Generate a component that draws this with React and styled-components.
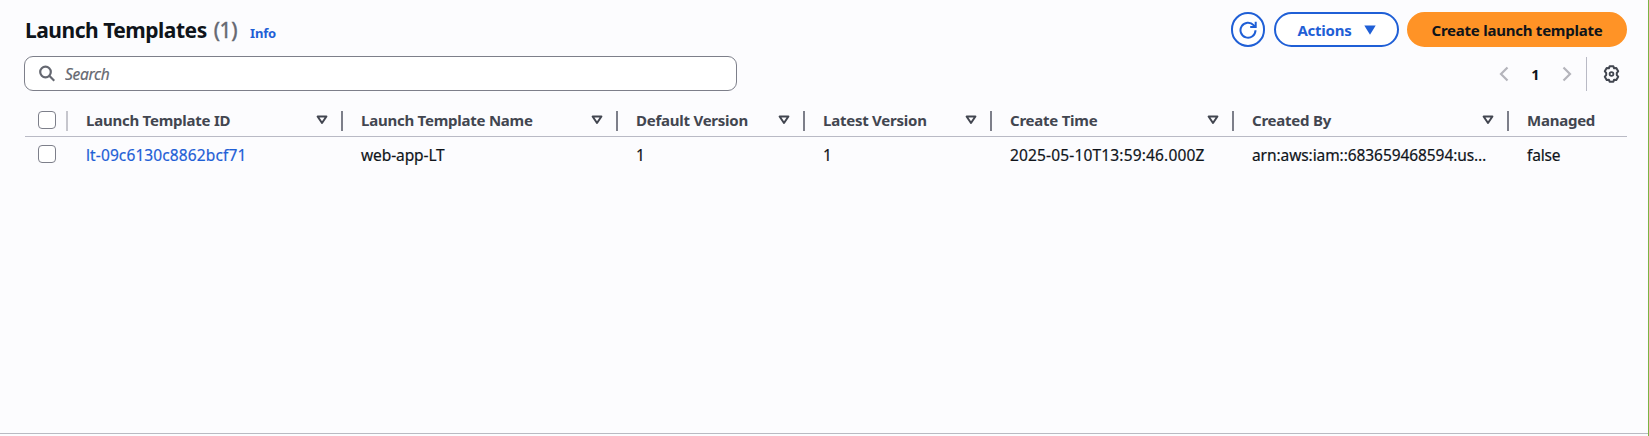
import React from "react";
import styled, { createGlobalStyle } from "styled-components";

const GlobalStyle = createGlobalStyle`
  *, *::before, *::after { box-sizing: border-box; }
  body { margin: 0; background: #fcfcfe; }
  button, input { font: inherit; letter-spacing: inherit; }
`;

const Panel = styled.main`
  display: flex;
  flex-direction: column;
  height: 434px;
  padding: 12px 21px 0 24px;
  border-bottom: 1px solid #b9bac2;
  background: #fcfcfe;
  color: #0f141a;
  font-family: "Noto Sans", "Open Sans", sans-serif;
  font-size: 15px;
`;

const Page = styled.div`
  height: 436px;
  border-right: 1px solid #7cb342;
`;

const Header = styled.header`
  display: flex;
  align-items: center;
  justify-content: space-between;
  height: 35px;
`;

const Heading = styled.div`
  display: flex;
  align-items: baseline;
  padding-top: 1px;
  padding-left: 1px;
`;

const Title = styled.h1`
  margin: 0;
  font-size: 21px;
  line-height: 28px;
  font-weight: 700;
  letter-spacing: -0.49px;
`;

const Counter = styled.span`
  margin-left: 7px;
  color: #656871;
  font-size: 21px;
  letter-spacing: -0.4px;
  -webkit-text-stroke: 0.4px currentColor;
`;

const InfoLink = styled.a`
  margin-left: 13px;
  color: #1f5fd6;
  font-size: 13px;
  font-weight: 700;
  letter-spacing: -0.2px;
`;

const ButtonGroup = styled.div`
  display: flex;
  gap: 8px;
`;

const Button = styled.button`
  display: flex;
  align-items: center;
  justify-content: center;
  gap: 12px;
  width: ${(p) => p.$width}px;
  height: 35px;
  padding: 0;
  border: 2px solid ${(p) => (p.$primary ? "#ff9326" : "#1f5fd6")};
  border-radius: 18px;
  background: ${(p) => (p.$primary ? "#ff9326" : "#fff")};
  color: ${(p) => (p.$primary ? "#0f141a" : "#1f5fd6")};
  font-weight: 700;
`;

const IconButton = styled(Button)`
  margin-right: 1px;
`;

const Toolbar = styled.div`
  display: flex;
  align-items: center;
  justify-content: space-between;
  height: 35px;
  margin-top: 9px;
`;

const SearchBox = styled.label`
  display: flex;
  align-items: center;
  gap: 10px;
  width: 713px;
  height: 35px;
  padding: 0 14px;
  border: 1px solid #7d7f8a;
  border-radius: 9px;
  background: #fff;
`;

const SearchInput = styled.input`
  flex: 1;
  padding: 0;
  border: 0;
  outline: 0;
  background: transparent;
  &::placeholder {
    color: #656871;
    opacity: 1;
    font-size: 15.5px;
    font-style: italic;
    letter-spacing: -0.3px;
    -webkit-text-stroke: 0.2px currentColor;
  }
`;

const Pagination = styled.nav`
  display: flex;
  align-items: center;
  height: 34px;
  padding-right: 7px;
`;

const PageNumber = styled.span`
  width: 53px;
  text-align: center;
  font-size: 14.5px;
  font-weight: 700;
`;

const Divider = styled.span`
  width: 1px;
  height: 34px;
  margin: 0 16px 0 14px;
  background: #b9bac5;
`;

const Row = styled.div`
  display: grid;
  grid-template-columns: 43px 275px 275px 187px 187px 242px 275px 1fr;
  height: ${(p) => (p.$head ? 31 : 38)}px;
  margin-top: ${(p) => (p.$head ? 15 : 0)}px;
  margin-left: 1px;
  border-bottom: ${(p) => (p.$head ? "1px solid #b9bac5" : "0")};
`;

const SelectCell = styled.div`
  display: flex;
  align-items: flex-start;
  height: ${(p) => (p.$head ? 20 : 38)}px;
  margin-top: ${(p) => (p.$head ? 5 : 0)}px;
  padding-left: 13px;
  padding-top: ${(p) => (p.$head ? 0 : 8)}px;
  border-right: ${(p) => (p.$head ? "2px solid #c6c6cd" : "0")};
`;

const Checkbox = styled.input`
  appearance: none;
  width: 18px;
  height: 18px;
  margin: 0;
  border: 1px solid #7d7f8a;
  border-radius: 4px;
  background: #fff;
`;

const HeadCell = styled.div`
  display: flex;
  align-items: center;
  justify-content: space-between;
  height: 20px;
  margin-top: 5px;
  padding: 0 13px 2px 18px;
  border-right: ${(p) => (p.$last ? "0" : "2px solid #7d7f8a")};
  color: #424650;
  font-weight: 700;
  white-space: nowrap;
`;

const Label = styled.span`
  letter-spacing: -0.24px;
`;

const Cell = styled.div`
  padding: 7px 18px 0;
  font-size: 15.5px;
  line-height: 22px;
  letter-spacing: ${(p) => p.$tracking || 0}px;
  white-space: nowrap;
  -webkit-text-stroke: 0.2px currentColor;
`;

const ResourceLink = styled.a`
  color: #1f5fd6;
`;

const SortIcon = () => (
  <svg width="12" height="10" viewBox="0 0 12 10" fill="none" stroke="#424650" strokeWidth="2">
    <path d="M1.600 1.500h8.800L6 8z" strokeLinejoin="round" />
  </svg>
);

const Chevron = ({ d }) => (
  <svg width="10" height="16" viewBox="0 0 10 16" fill="none" stroke="#b4b4bb" strokeWidth="2.200">
    <path d={d} />
  </svg>
);

const columns = [
  { label: "Launch Template ID", value: "lt-09c6130c8862bcf71", link: true, tracking: 0.11 },
  { label: "Launch Template Name", value: "web-app-LT", tracking: -0.1 },
  { label: "Default Version", value: "1" },
  { label: "Latest Version", value: "1" },
  { label: "Create Time", value: "2025-05-10T13:59:46.000Z", tracking: 0.16 },
  { label: "Created By", value: "arn:aws:iam::683659468594:us…", tracking: -0.08 },
  { label: "Managed", value: "false", tracking: -0.2 },
];

export default function App() {
  return (
    <Page>
      <GlobalStyle />
      <Panel>
        <Header>
          <Heading>
            <Title>Launch Templates</Title>
            <Counter>(1)</Counter>
            <InfoLink>Info</InfoLink>
          </Heading>
          <ButtonGroup>
            <IconButton $width={34} aria-label="Refresh">
              <svg width="18" height="18" viewBox="0 0 18 18" fill="none" stroke="currentColor" strokeWidth="2">
                <path d="M16.500 9.200A7.500 7.500 0 1 1 14.600 4.200L16.500 6" />
                <path d="M16.700 0.800V6.100H11.200" />
              </svg>
            </IconButton>
            <Button $width={125}>
              <Label>Actions</Label>
              <svg width="12" height="10" viewBox="0 0 12 10" fill="currentColor">
                <path d="M0.300 0.400h11.400L6 9.700z" />
              </svg>
            </Button>
            <Button $width={220} $primary>
              <Label>Create launch template</Label>
            </Button>
          </ButtonGroup>
        </Header>
        <Toolbar>
          <SearchBox>
            <svg width="16" height="17" viewBox="0 0 16 17" fill="none" stroke="#656871" strokeWidth="2.200">
              <circle cx="6.500" cy="7" r="5.300" />
              <path d="M10.300 10.800l5 5" />
            </svg>
            <SearchInput placeholder="Search" />
          </SearchBox>
          <Pagination>
            <Chevron d="M8.500 1.500L2 8l6.500 6.500" />
            <PageNumber>1</PageNumber>
            <Chevron d="M1.500 1.500L8 8l-6.500 6.500" />
            <Divider />
            <svg width="17" height="18" viewBox="0 0 17 18" fill="none" stroke="#424650" strokeWidth="2" strokeLinejoin="round">
              <path d="M6.600 1.300h3.800l.7 2 2.200-.3 1.900 3.300-1.400 1.600v2.200l1.400 1.600-1.900 3.300-2.200-.3-.7 2H6.600l-.7-2-2.200.3-1.900-3.300 1.400-1.600V7.900L1.800 6.300 3.700 3l2.200.3z" />
              <circle cx="8.500" cy="9" r="1.900" strokeWidth="1.800" />
            </svg>
          </Pagination>
        </Toolbar>
        <Row $head>
          <SelectCell $head>
            <Checkbox type="checkbox" />
          </SelectCell>
          {columns.map((c, i) => (
            <HeadCell key={c.label} $last={i === columns.length - 1}>
              <Label>{c.label}</Label>
              {i < columns.length - 1 && <SortIcon />}
            </HeadCell>
          ))}
        </Row>
        <Row>
          <SelectCell>
            <Checkbox type="checkbox" />
          </SelectCell>
          {columns.map((c) => (
            <Cell key={c.label} $tracking={c.tracking}>
              {c.link ? <ResourceLink>{c.value}</ResourceLink> : c.value}
            </Cell>
          ))}
        </Row>
      </Panel>
    </Page>
  );
}
